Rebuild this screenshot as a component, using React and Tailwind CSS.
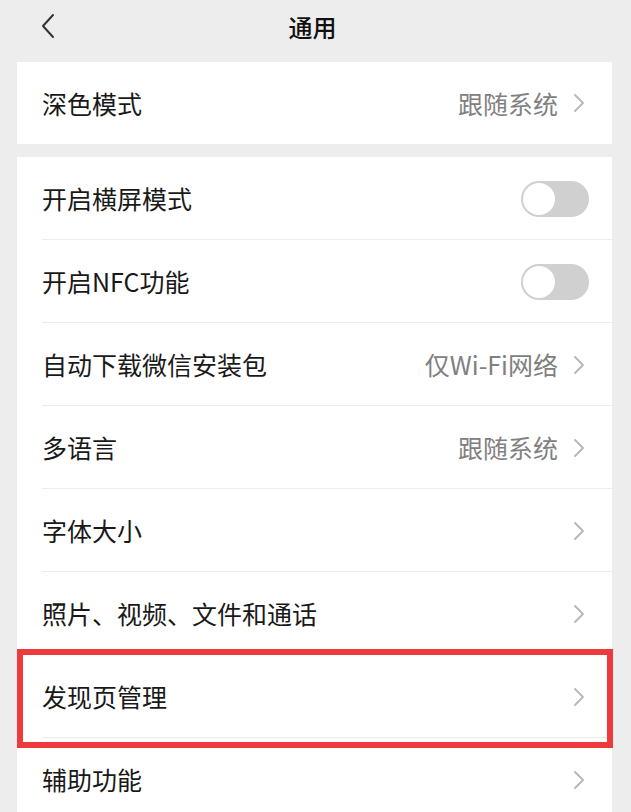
import React from 'react';

const font = { fontFamily: '"Noto Sans CJK SC", "Noto Sans", sans-serif' };

function Chevron() {
  return (
    <svg width="12" height="20" viewBox="0 0 12 20" fill="none" className="shrink-0">
      <path d="M2 2 L10 10 L2 18" stroke="#b5b5b5" strokeWidth="1.8" strokeLinecap="round" strokeLinejoin="round" />
    </svg>
  );
}

function Toggle() {
  return (
    <div className="w-[68px] h-[36px] rounded-full bg-[#d0d0d0] p-[2px] flex items-center -mr-[4px]">
      <div className="w-[32px] h-[32px] rounded-full bg-white" />
    </div>
  );
}

function Row({ label, value, toggle, last }) {
  return (
    <div className="h-[83px] flex items-center pl-[25px] pr-[27px] relative">
      <span className="flex-1 text-[25px] text-[#191919] leading-none">{label}</span>
      {toggle ? (
        <Toggle />
      ) : (
        <div className="flex items-center gap-[15px]">
          {value && <span className="text-[25px] text-[#808080] leading-none">{value}</span>}
          <Chevron />
        </div>
      )}
      {!last && <div className="absolute left-[25px] right-0 bottom-0 h-px bg-[#ececec]" />}
    </div>
  );
}

export default function App() {
  const rows = [
    { label: '开启横屏模式', toggle: true },
    { label: '开启NFC功能', toggle: true },
    { label: '自动下载微信安装包', value: '仅Wi-Fi网络' },
    { label: '多语言', value: '跟随系统' },
    { label: '字体大小' },
    { label: '照片、视频、文件和通话' },
    { label: '发现页管理' },
    { label: '辅助功能', last: true },
  ];

  return (
    <div className="w-[631px] h-[812px] overflow-hidden bg-[#ededed] relative" style={font}>
      {/* Header */}
      <div className="h-[62px] flex items-center relative">
        <svg width="16" height="26" viewBox="0 0 16 26" fill="none" className="absolute left-[40px] top-[13px]">
          <path d="M13 2 L3 13 L13 24" stroke="#333" strokeWidth="2" strokeLinecap="round" strokeLinejoin="round" />
        </svg>
        <div className="flex-1 text-center text-[24px] font-medium text-[#111] leading-none -mt-[8px] -ml-[6px]">通用</div>
      </div>

      <div className="mx-[17px] w-[595px] flex flex-col gap-[13px]">
        <div className="bg-white">
          <div className="h-[82px] flex items-center pl-[25px] pr-[27px]">
            <span className="flex-1 text-[25px] text-[#191919] leading-none">深色模式</span>
            <div className="flex items-center gap-[15px]">
              <span className="text-[25px] text-[#808080] leading-none">跟随系统</span>
              <Chevron />
            </div>
          </div>
        </div>

        <div className="bg-white">
          {rows.map((r) => (
            <Row key={r.label} {...r} />
          ))}
        </div>
      </div>

      {/* highlight box */}
      <div className="absolute left-[17px] top-[649px] w-[596px] h-[99px] border-[6px] border-[#ef3a3d]" />
    </div>
  );
}
